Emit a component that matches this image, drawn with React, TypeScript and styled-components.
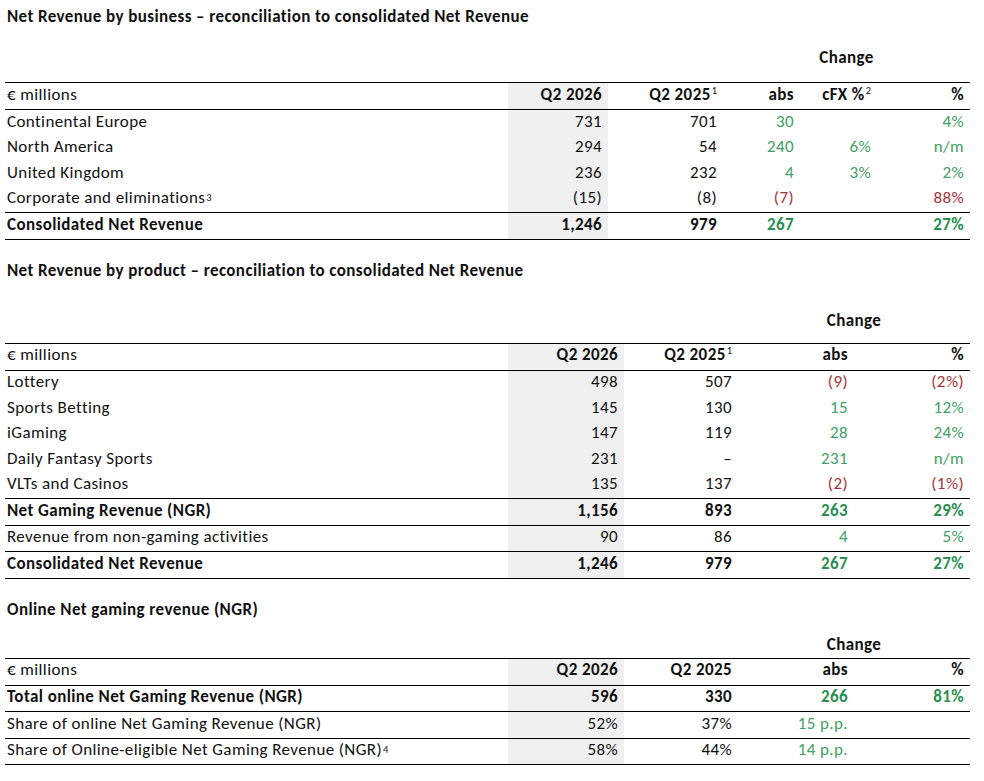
import React from "react";
import styled, { createGlobalStyle } from "styled-components";

const Global = createGlobalStyle`
  html, body { margin: 0; padding: 0; background: #fff; }
  body { font-family: "Carlito", "Lato", "Liberation Sans", sans-serif; color: #111; letter-spacing: 0.4px; }
`;

type Tone = "green" | "red" | undefined;
type CellData = { text: React.ReactNode; tone?: Tone };
type RowData = { label: React.ReactNode; cells: CellData[]; bold?: boolean; ruled?: boolean };

const COLS1 = "503px 100px 115px 77px 77px 93px";
const COLS2 = "503px 116px 114px 116px 116px";

const Page = styled.div`
  width: 965px;
  padding: 7px 0 0 5px;
`;

const Section = styled.section<{ $top: number }>`
  margin-top: ${(p) => p.$top}px;
`;

const Title = styled.h2<{ $gap: number }>`
  margin: 0 0 ${(p) => p.$gap}px 0;
  padding-left: 2px;
  font-size: 17px;
  line-height: 20px;
  font-weight: 700;
`;

const Grid = styled.div<{ $cols: string }>`
  display: grid;
  grid-template-columns: ${(p) => p.$cols};
`;

const ChangeRow = styled(Grid)<{ $gap: number }>`
  margin-bottom: ${(p) => p.$gap}px;
`;

const ChangeLabel = styled.div<{ $from: number }>`
  grid-column: ${(p) => p.$from} / -1;
  text-align: center;
  font-weight: 700;
  font-size: 17px;
  line-height: 20px;
`;

const Table = styled.div`
  border-top: 1px solid #000;
`;

const Row = styled(Grid)<{ $ruled?: boolean; $bold?: boolean; $h: number; $lift: number }>`
  height: ${(p) => p.$h}px;
  border-bottom: ${(p) => (p.$ruled ? "1px solid #000" : "0")};
  font-weight: ${(p) => (p.$bold ? 700 : 400)};
  font-size: 17px;
  & > div {
    padding-bottom: ${(p) => p.$lift}px;
  }
`;

const Label = styled.div`
  display: flex;
  align-items: center;
  padding-left: 2px;
  white-space: nowrap;
`;

const Cell = styled.div<{ $tone?: Tone; $shade?: boolean; $bold?: boolean }>`
  display: flex;
  align-items: center;
  justify-content: flex-end;
  padding-right: 6px;
  white-space: nowrap;
  background: ${(p) => (p.$shade ? "#f0f0f0" : "transparent")};
  color: ${(p) =>
    p.$tone === "green"
      ? p.$bold
        ? "#2b8f52"
        : "#3fa063"
      : p.$tone === "red"
      ? "#a8323a"
      : "#111"};
`;

const Sup = styled.sup`
  font-size: 10.5px;
  line-height: 0;
  vertical-align: 6px;
  margin-left: 1px;
  font-weight: 400;
  letter-spacing: 0;
`;

function DataTable({
  cols,
  header,
  rows,
}: {
  cols: string;
  header: RowData;
  rows: RowData[];
}) {
  const render = (r: RowData, i: number, isHeader: boolean) => (
    <Row
      key={i}
      $cols={cols}
      $ruled={isHeader || r.ruled}
      $bold={r.bold}
      $h={isHeader ? 26 : 25.5}
      $lift={isHeader ? 4 : 3}
    >
      <Label>{r.label}</Label>
      {r.cells.map((c, j) => (
        <Cell key={j} $tone={c.tone} $shade={j === 0} $bold={r.bold || isHeader}>
          {c.text}
        </Cell>
      ))}
    </Row>
  );
  return (
    <Table>
      {render(header, -1, true)}
      {rows.map((r, i) => render(r, i, false))}
    </Table>
  );
}

const g = (text: string): CellData => ({ text, tone: "green" });
const r = (text: string): CellData => ({ text, tone: "red" });
const n = (text: React.ReactNode): CellData => ({ text });

const HeaderBold = styled.span`
  font-weight: 700;
`;
const HeaderPlain = styled.span`
  font-weight: 400;
`;

const header1: RowData = {
  label: <HeaderPlain>€ millions</HeaderPlain>,
  cells: [
    n(<HeaderBold>Q2 2026</HeaderBold>),
    n(
      <HeaderBold>
        Q2 2025<Sup>1</Sup>
      </HeaderBold>
    ),
    n(<HeaderBold>abs</HeaderBold>),
    n(
      <HeaderBold>
        cFX %<Sup>2</Sup>
      </HeaderBold>
    ),
    n(<HeaderBold>%</HeaderBold>),
  ],
};

const rows1: RowData[] = [
  { label: "Continental Europe", cells: [n("731"), n("701"), g("30"), n(""), g("4%")] },
  { label: "North America", cells: [n("294"), n("54"), g("240"), g("6%"), g("n/m")] },
  { label: "United Kingdom", cells: [n("236"), n("232"), g("4"), g("3%"), g("2%")] },
  {
    label: (
      <>
        Corporate and eliminations<Sup>3</Sup>
      </>
    ),
    cells: [n("(15)"), n("(8)"), r("(7)"), n(""), r("88%")],
    ruled: true,
  },
  {
    label: "Consolidated Net Revenue",
    cells: [n("1,246"), n("979"), g("267"), n(""), g("27%")],
    bold: true,
    ruled: true,
  },
];

const header2: RowData = {
  label: <HeaderPlain>€ millions</HeaderPlain>,
  cells: [
    n(<HeaderBold>Q2 2026</HeaderBold>),
    n(
      <HeaderBold>
        Q2 2025<Sup>1</Sup>
      </HeaderBold>
    ),
    n(<HeaderBold>abs</HeaderBold>),
    n(<HeaderBold>%</HeaderBold>),
  ],
};

const rows2: RowData[] = [
  { label: "Lottery", cells: [n("498"), n("507"), r("(9)"), r("(2%)")] },
  { label: "Sports Betting", cells: [n("145"), n("130"), g("15"), g("12%")] },
  { label: "iGaming", cells: [n("147"), n("119"), g("28"), g("24%")] },
  { label: "Daily Fantasy Sports", cells: [n("231"), n("–"), g("231"), g("n/m")] },
  { label: "VLTs and Casinos", cells: [n("135"), n("137"), r("(2)"), r("(1%)")], ruled: true },
  {
    label: "Net Gaming Revenue (NGR)",
    cells: [n("1,156"), n("893"), g("263"), g("29%")],
    bold: true,
    ruled: true,
  },
  {
    label: "Revenue from non-gaming activities",
    cells: [n("90"), n("86"), g("4"), g("5%")],
    ruled: true,
  },
  {
    label: "Consolidated Net Revenue",
    cells: [n("1,246"), n("979"), g("267"), g("27%")],
    bold: true,
    ruled: true,
  },
];

const header3: RowData = {
  label: <HeaderPlain>€ millions</HeaderPlain>,
  cells: [
    n(<HeaderBold>Q2 2026</HeaderBold>),
    n(<HeaderBold>Q2 2025</HeaderBold>),
    n(<HeaderBold>abs</HeaderBold>),
    n(<HeaderBold>%</HeaderBold>),
  ],
};

const rows3: RowData[] = [
  {
    label: "Total online Net Gaming Revenue (NGR)",
    cells: [n("596"), n("330"), g("266"), g("81%")],
    bold: true,
    ruled: true,
  },
  {
    label: "Share of online Net Gaming Revenue (NGR)",
    cells: [n("52%"), n("37%"), g("15 p.p."), n("")],
    ruled: true,
  },
  {
    label: (
      <>
        Share of Online-eligible Net Gaming Revenue (NGR)<Sup>4</Sup>
      </>
    ),
    cells: [n("58%"), n("44%"), g("14 p.p."), n("")],
    ruled: true,
  },
];

export default function App() {
  return (
    <>
      <Global />
      <Page>
        <Section $top={0}>
          <Title $gap={21}>Net Revenue by business – reconciliation to consolidated Net Revenue</Title>
          <ChangeRow $cols={COLS1} $gap={14}>
            <ChangeLabel $from={4}>Change</ChangeLabel>
          </ChangeRow>
          <DataTable cols={COLS1} header={header1} rows={rows1} />
        </Section>
        <Section $top={21}>
          <Title $gap={30}>Net Revenue by product – reconciliation to consolidated Net Revenue</Title>
          <ChangeRow $cols={COLS2} $gap={12}>
            <ChangeLabel $from={4}>Change</ChangeLabel>
          </ChangeRow>
          <DataTable cols={COLS2} header={header2} rows={rows2} />
        </Section>
        <Section $top={21}>
          <Title $gap={15}>Online Net gaming revenue (NGR)</Title>
          <ChangeRow $cols={COLS2} $gap={3}>
            <ChangeLabel $from={4}>Change</ChangeLabel>
          </ChangeRow>
          <DataTable cols={COLS2} header={header3} rows={rows3} />
        </Section>
      </Page>
    </>
  );
}
